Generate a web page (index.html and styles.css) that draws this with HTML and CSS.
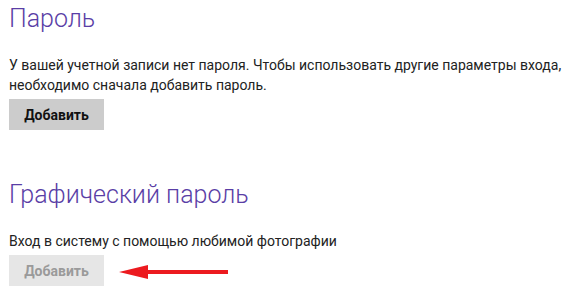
FILE: index.html
```html
<!DOCTYPE html>
<html lang="ru">
<head>
    <meta charset="UTF-8">
    <title>Параметры входа</title>
    <link rel="stylesheet" href="styles.css">
</head>
<body>
    <div class="settings">
        <section class="group">
            <h2>Пароль</h2>
            <p>У вашей учетной записи нет пароля. Чтобы использовать другие параметры входа, необходимо сначала добавить пароль.</p>
            <button class="btn">Добавить</button>
        </section>

        <section class="group">
            <h2>Графический пароль</h2>
            <p>Вход в систему с помощью любимой фотографии</p>
            <div class="row">
                <button class="btn" disabled>Добавить</button>
                <svg class="arrow" width="110" height="14" viewBox="0 0 110 14">
                    <polygon points="0,7 29,0 29,14" fill="#ec1a1f"/>
                    <rect x="27" y="5" width="82" height="4" fill="#ec1a1f"/>
                </svg>
            </div>
        </section>
    </div>
</body>
</html>
```

FILE: styles.css
```css
body {
    margin: 0;
    background: #fff;
    font-family: Roboto, 'Noto Sans', sans-serif;
    color: #222;
}

.settings {
    padding: 0 0 0 9px;
}

.group {
    margin-bottom: 46px;
}

.group h2 {
    margin: 0;
    font-size: 25px;
    font-weight: 300;
    color: #5a3ea6;
    line-height: 37px;
}

.group p {
    margin: 18px 0 4px;
    font-size: 14px;
    line-height: 20px;
}

.btn {
    width: 95px;
    height: 31px;
    border: 0;
    background: #cccccc;
    font-family: inherit;
    font-size: 14px;
    font-weight: 700;
    color: #111;
    padding: 0;
}

.btn:disabled {
    background: #e6e6e6;
    color: #9a9a9a;
}

.row {
    display: flex;
    align-items: center;
    gap: 15px;
}

.arrow {
    margin-top: 3px;
}
```
